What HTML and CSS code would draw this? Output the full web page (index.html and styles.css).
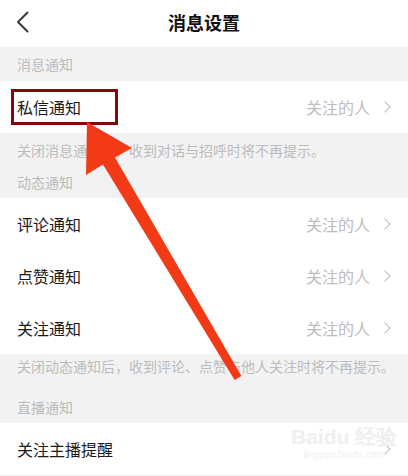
FILE: index.html
```html
<!DOCTYPE html>
<html lang="zh">
<head>
    <meta charset="UTF-8">
    <meta name="viewport" content="width=device-width, initial-scale=1.0">
    <title>消息设置</title>
    <link rel="stylesheet" href="styles.css">
</head>
<body>
    <div class="stran">
        <div class="glava">
            <svg class="nazaj" width="14" height="22" viewBox="0 0 14 22">
                <path d="M11.5 1.5 L2 11 L11.5 20.5" fill="none" stroke="#333" stroke-width="1.8" stroke-linecap="round" stroke-linejoin="round"/>
            </svg>
            <div class="naslov">消息设置</div>
        </div>

        <div class="skupina">消息通知</div>
        <div class="vrstica">
            <span class="ime oznaceno">私信通知</span>
            <span class="vrednost">关注的人<i class="puscica"></i></span>
        </div>

        <div class="siv prvi">
            <div class="opomba">关闭消息通知后，收到对话与招呼时将不再提示。</div>
            <div class="skupina">动态通知</div>
        </div>
        <div class="vrstica">
            <span class="ime">评论通知</span>
            <span class="vrednost">关注的人<i class="puscica"></i></span>
        </div>
        <div class="vrstica">
            <span class="ime">点赞通知</span>
            <span class="vrednost">关注的人<i class="puscica"></i></span>
        </div>
        <div class="vrstica">
            <span class="ime">关注通知</span>
            <span class="vrednost">关注的人<i class="puscica"></i></span>
        </div>

        <div class="siv drugi">
            <div class="opomba">关闭动态通知后，收到评论、点赞与他人关注时将不再提示。</div>
            <div class="skupina">直播通知</div>
        </div>
        <div class="vrstica">
            <span class="ime">关注主播提醒</span>
            <span class="vrednost"><i class="puscica"></i></span>
        </div>

        <div class="vodni-znak">
            <span class="znak">Bai<b>du</b> 经验</span>
            <span class="url">jingyan.baidu.com</span>
        </div>

        <svg class="strelica" width="408" height="476" viewBox="0 0 408 476">
            <polygon points="87,122 86,175 103,164.6 234.6,380 241.4,376 115,157.4 132,148" fill="#f23a17"/>
        </svg>
    </div>
</body>
</html>
```

FILE: styles.css
```css
* {
    box-sizing: border-box;
}

body {
    margin: 0;
    background-color: #f2f2f2;
    font-family: "Noto Sans CJK SC", "Noto Sans", sans-serif;
}

.stran {
    position: relative;
    width: 408px;
    height: 476px;
    overflow: hidden;
    background-color: #f2f2f2;
}

.glava {
    display: flex;
    align-items: center;
    justify-content: center;
    height: 47px;
    background-color: white;
    position: relative;
}

.nazaj {
    position: absolute;
    left: 16px;
    top: 11px;
}

.naslov {
    font-size: 18px;
    font-weight: bold;
    color: #111;
    line-height: 1;
    margin-top: -4px;
}

.skupina {
    height: 34px;
    display: flex;
    align-items: center;
    padding-left: 17px;
    font-size: 14px;
    color: #bcbcbc;
}

.siv .skupina {
    height: 32px;
}

.vrstica {
    display: flex;
    align-items: center;
    justify-content: space-between;
    height: 52px;
    padding: 0 16px 0 17px;
    background-color: white;
}

.ime {
    font-size: 16px;
    color: #1a1a1a;
}

.oznaceno {
    outline: 3px solid #7d0b0b;
    outline-offset: 3px;
    padding: 0 31px 0 0;
}

.vrednost {
    display: flex;
    align-items: center;
    font-size: 16px;
    color: #bdbdbd;
}

.puscica {
    width: 8px;
    height: 8px;
    margin-left: 11px;
    margin-right: 3px;
    border-top: 1.5px solid #bdbdbd;
    border-right: 1.5px solid #bdbdbd;
    transform: rotate(45deg);
}

.opomba {
    font-size: 14px;
    color: #bcbcbc;
    line-height: 22px;
    padding-left: 17px;
    white-space: nowrap;
}

.prvi .opomba {
    padding-top: 6px;
    padding-bottom: 5px;
}

.drugi .opomba {
    padding-top: 1px;
    padding-bottom: 14px;
}

.vodni-znak {
    position: absolute;
    left: 291px;
    top: 425px;
    display: flex;
    flex-direction: column;
    align-items: center;
    color: #efefef;
    font-family: "Liberation Sans", sans-serif;
}

.znak {
    font-size: 21px;
    font-weight: bold;
    line-height: 24px;
}

.url {
    font-size: 10px;
    line-height: 12px;
}

.strelica {
    position: absolute;
    left: 0;
    top: 0;
}
```
